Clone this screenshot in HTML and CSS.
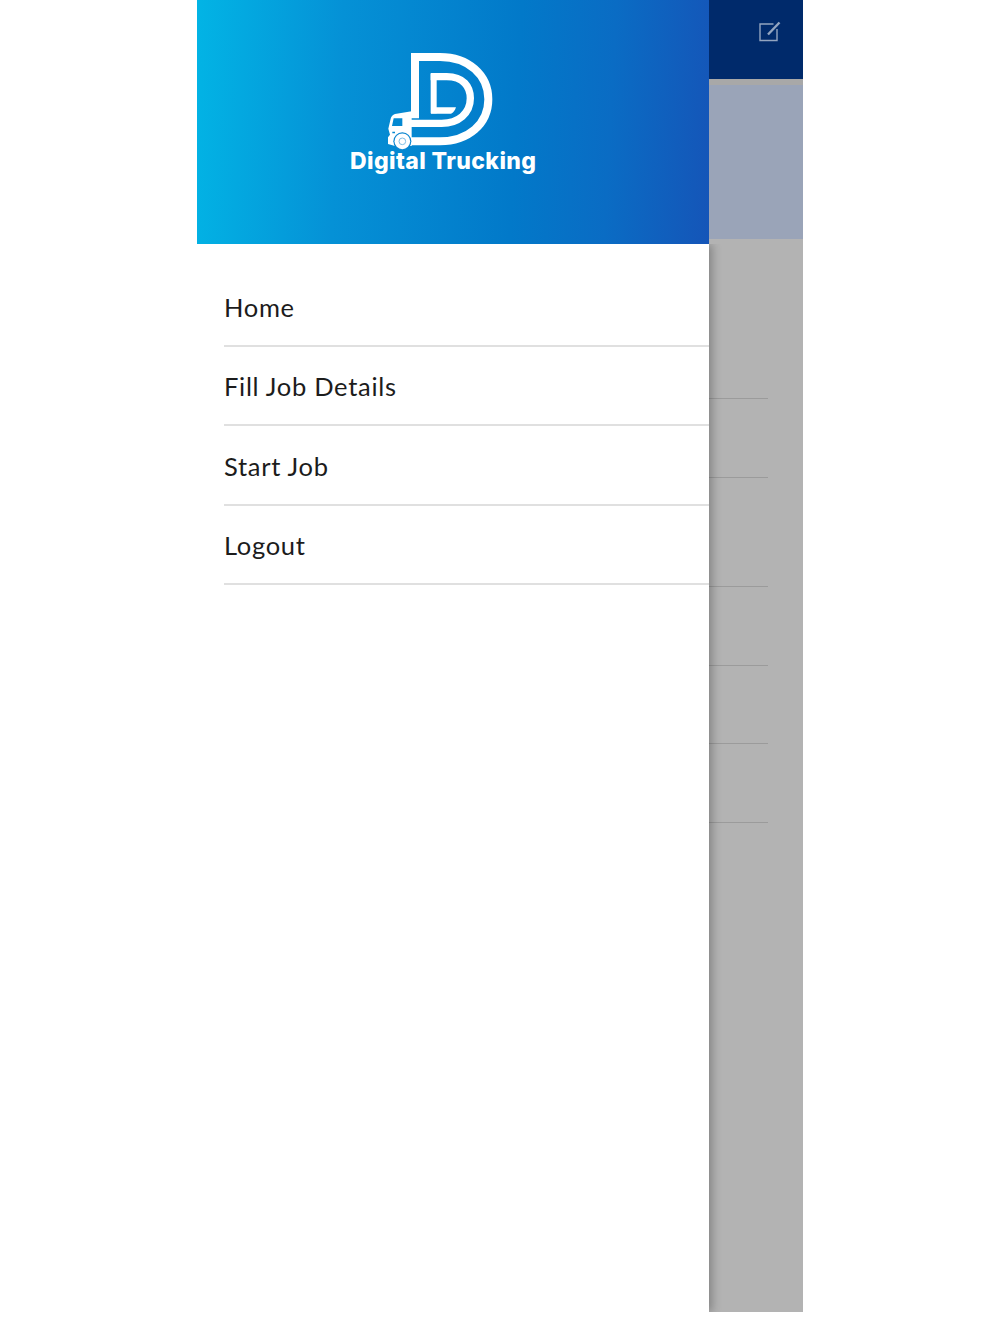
FILE: index.html
```html
<!DOCTYPE html>
<html lang="en">
<head>
<meta charset="utf-8">
<title>Digital Trucking</title>
<link rel="stylesheet" href="styles.css">
</head>
<body>
<div class="phone">
  <aside class="drawer">
    <header class="brand">
      <div class="logo">
        <svg class="logo-mark" viewBox="0 0 330 300" width="110" height="100" aria-hidden="true">
          <g fill="none" stroke="#fff">
            <path stroke-width="24" d="M90 205V21H165C250 21 310 75 310 148C310 222 250 274 165 274H70"/>
            <path stroke-width="22" d="M137 80H185C235 80 256 110 256 145C256 190 220 220 170 220H76"/>
            <path stroke-width="18" d="M146 72V190"/>
          </g>
          <path fill="#fff" d="M138 172H213C210 182 205 188 198 191H138Z"/>
          <path fill="#fff" fill-rule="evenodd" d="M80 184V288H30L9 282V262L15 254L10 236L17 206Q20 195 30 192ZM26 205L21 228H52V205ZM22 245H30V250H22Z"/>
          <circle cx="52" cy="274" r="27" fill="#0b86d0"/>
          <circle cx="52" cy="274" r="23.500" fill="#fff"/>
          <circle cx="52" cy="274" r="10" fill="none" stroke="#7fbfe6" stroke-width="3"/>
        </svg>
        <div class="logo-name">Digital Trucking</div>
      </div>
    </header>
    <nav class="menu">
      <a class="menu-item">Home</a>
      <a class="menu-item">Fill Job Details</a>
      <a class="menu-item">Start Job</a>
      <a class="menu-item">Logout</a>
    </nav>
  </aside>
  <main class="behind">
    <div class="topbar">
      <svg class="edit-icon" viewBox="0 0 24 22" width="24" height="22" aria-hidden="true">
        <path fill="none" stroke="#93a5c0" stroke-width="1.4" d="M15.5 4H2V20.5H19V9"/>
        <path fill="none" stroke="#93a5c0" stroke-width="2.4" d="M10 14.500L21.500 2.500"/>
      </svg>
    </div>
    <div class="band"></div>
    <div class="hero"></div>
    <div class="rows">
      <div class="row-line"></div>
      <div class="row-line row-line-gap"></div>
      <div class="row-line"></div>
      <div class="row-line row-line-tight"></div>
      <div class="row-line"></div>
      <div class="row-line"></div>
    </div>
  </main>
</div>
</body>
</html>
```
FILE: styles.css
```css
* { box-sizing: border-box; }
html, body { margin: 0; padding: 0; background: #fff; }
.phone {
  display: flex;
  width: 606px;
  height: 1312px;
  margin-left: 197px;
}
.drawer {
  position: relative;
  z-index: 1;
  display: flex;
  flex-direction: column;
  flex: 0 0 512px;
}
.brand {
  height: 244px;
  padding: 50px 0 0 153px;
  background: linear-gradient(93deg, #02b4e5 0%, #0591d6 28%, #0279c9 62%, #0a6cc4 80%, #1555b8 100%);
}
.logo { width: 187px; display: flex; flex-direction: column; }
.logo-mark { display: block; margin-left: 35px; }
.logo-name {
  margin-top: -2px;
  font: 800 23px/26px Inter, "Liberation Sans", sans-serif;
  letter-spacing: 0.4px;
  color: #fff;
  white-space: nowrap;
}
.menu {
  flex: 1;
  padding: 23px 0 0 27px;
  background: #fff;
  box-shadow: 3px 0 9px rgba(0, 0, 0, 0.28);
  clip-path: inset(0 -20px 0 0);
}
.menu-item {
  display: flex;
  align-items: center;
  height: 79.5px;
  padding-top: 2px;
  border-bottom: 2px solid #e0e0e0;
  font: 400 25.5px/32px Lato, "Noto Sans", sans-serif;
  letter-spacing: 0.7px;
  color: #1c1c1c;
}
.behind {
  flex: 1;
  display: flex;
  flex-direction: column;
  background: #b3b3b3;
}
.topbar {
  height: 79px;
  padding: 20px 0 0 49px;
  background: #002a6b;
}
.edit-icon { display: block; }
.band { height: 6px; background: #a8a8a8; }
.hero { height: 154px; background: #9aa4b8; }
.rows { padding-top: 159px; }
.row-line { width: 59px; height: 1px; margin-bottom: 78px; background: #9b9b9b; }
.row-line-gap { margin-bottom: 108px; }
.row-line-tight { margin-bottom: 77px; }
```
